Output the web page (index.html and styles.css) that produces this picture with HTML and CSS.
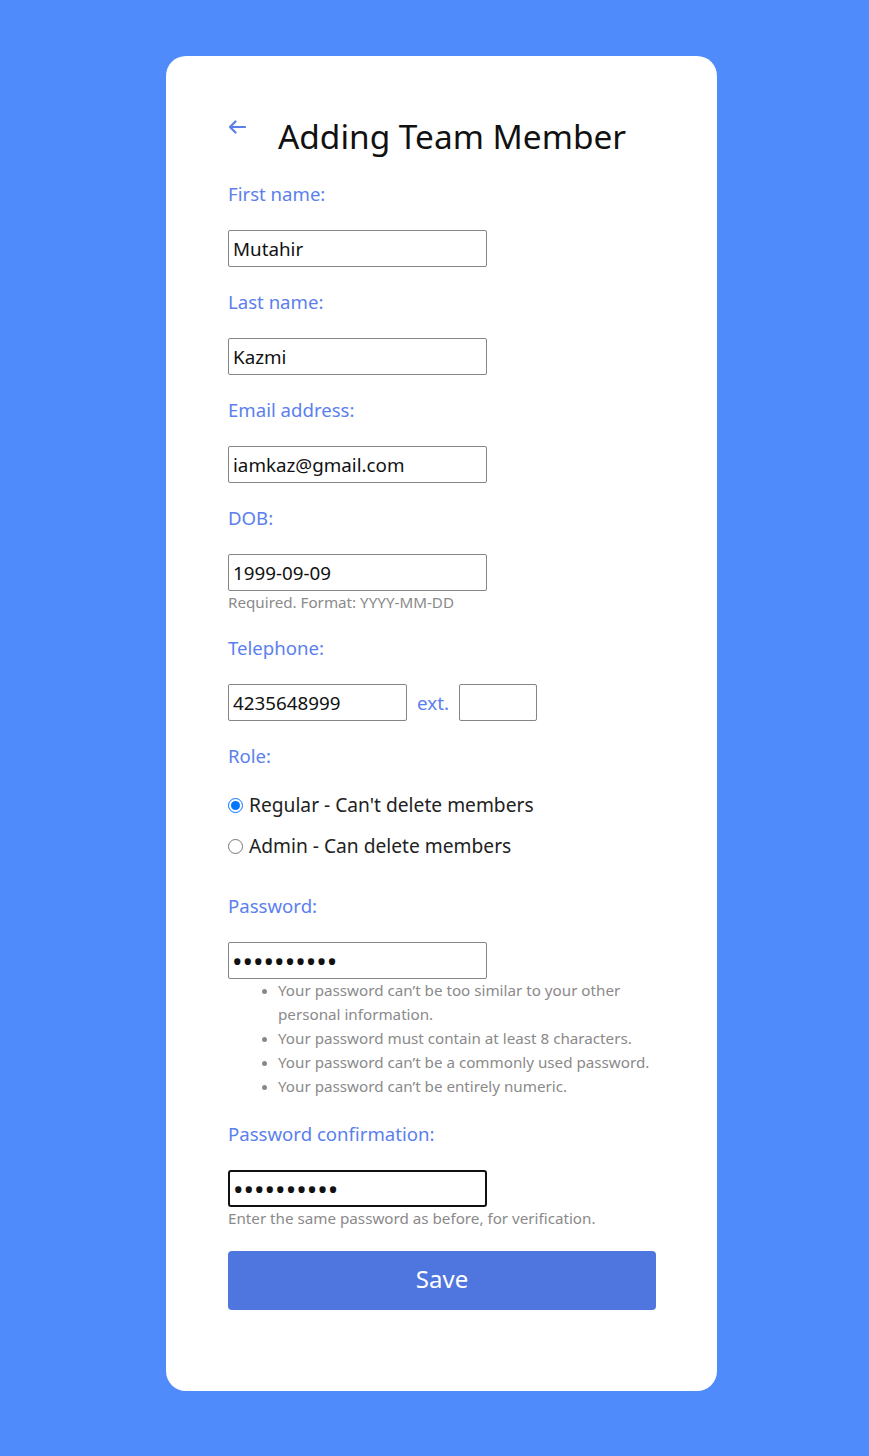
FILE: index.html
```html
<!DOCTYPE html>
<html lang="en">
<head>
<meta charset="utf-8">
<title>Adding Team Member</title>
<link rel="stylesheet" href="styles.css">
</head>
<body>
<main class="card">
  <header class="head">
    <a class="back" href="#" aria-label="Back">
      <svg width="18" height="14" viewBox="0 0 18 14"><path d="M17 7H2M7.5 1.5L2 7l5.5 5.5" fill="none" stroke="#5b7fe6" stroke-width="2.2" stroke-linecap="round" stroke-linejoin="round"/></svg>
    </a>
    <h1 class="title">Adding Team Member</h1>
  </header>
  <form class="form">
    <div class="field">
      <label class="label">First name:</label>
      <input class="input" type="text" value="Mutahir">
    </div>
    <div class="field">
      <label class="label">Last name:</label>
      <input class="input" type="text" value="Kazmi">
    </div>
    <div class="field">
      <label class="label">Email address:</label>
      <input class="input" type="text" value="iamkaz@gmail.com">
    </div>
    <div class="field">
      <label class="label">DOB:</label>
      <input class="input" type="text" value="1999-09-09">
      <span class="help">Required. Format: YYYY-MM-DD</span>
    </div>
    <div class="field">
      <label class="label">Telephone:</label>
      <div class="phone">
        <input class="input input-tel" type="text" value="4235648999">
        <span class="ext">ext.</span>
        <input class="input input-ext" type="text" value="">
      </div>
    </div>
    <div class="field field-role">
      <label class="label">Role:</label>
      <div class="radios">
        <label class="radio"><input type="radio" name="role" checked> Regular - Can't delete members</label>
        <label class="radio"><input type="radio" name="role"> Admin - Can delete members</label>
      </div>
    </div>
    <div class="field">
      <label class="label">Password:</label>
      <input class="input" type="password" value="abcdefghij">
      <ul class="rules">
        <li>Your password can’t be too similar to your other personal information.</li>
        <li>Your password must contain at least 8 characters.</li>
        <li>Your password can’t be a commonly used password.</li>
        <li>Your password can’t be entirely numeric.</li>
      </ul>
    </div>
    <div class="field">
      <label class="label">Password confirmation:</label>
      <input class="input input-focus" type="password" value="abcdefghij">
      <span class="help">Enter the same password as before, for verification.</span>
    </div>
    <button class="save" type="button">Save</button>
  </form>
</main>
</body>
</html>
```

FILE: styles.css
```css
* { box-sizing: border-box; }
html, body {
  margin: 0;
  padding: 0;
}
body {
  background: #508bfc;
  font-family: "Noto Sans", "Open Sans", sans-serif;
  color: #222;
  padding: 56px 0 65px;
}
.card {
  width: 551px;
  margin: 0 0 0 166px;
  background: #fff;
  border-radius: 20px;
  padding: 50px 62px 81px;
}
.head {
  display: flex;
  align-items: flex-start;
  height: 74px;
  padding-top: 6px;
}
.back {
  display: block;
  width: 50px;
  padding-top: 8px;
  line-height: 0;
}
.title {
  margin: 0;
  font-weight: 400;
  font-size: 33.4px;
  line-height: 48px;
  color: #111;
}
.form {
  display: flex;
  flex-direction: column;
}
.field {
  display: flex;
  flex-direction: column;
  align-items: flex-start;
  margin-bottom: 21px;
}
.label {
  display: block;
  font-size: 18.6px;
  line-height: 28px;
  color: #5b80ee;
  margin-bottom: 22px;
}
.input {
  width: 259px;
  height: 37px;
  border: 1px solid #858585;
  border-radius: 2px;
  padding: 0 4px;
  font-family: inherit;
  font-size: 18.8px;
  color: #111;
  background: #fff;
  outline: none;
}
.input[type="password"] {
  font-size: 28px;
  padding-left: 3px;
}
.input-focus {
  border: 2px solid #111;
  border-radius: 3px;
  padding: 0 2px;
}
.help {
  display: block;
  font-size: 15.2px;
  line-height: 22px;
  color: #8a8a8a;
}
.phone {
  display: flex;
  align-items: center;
}
.input-tel { width: 179px; }
.ext {
  font-size: 18.8px;
  color: #5b80ee;
  margin: 0 10px 0 10px;
}
.input-ext { width: 78px; }
.field-role .label { margin-bottom: 21px; }
.radios {
  display: flex;
  flex-direction: column;
  gap: 13px;
  margin-bottom: 11px;
}
.radio {
  display: flex;
  align-items: center;
  font-size: 19.2px;
  line-height: 28px;
  color: #222;
}
.radio input {
  width: 15px;
  height: 15px;
  margin: 0 6px 0 0;
}
.rules {
  margin: -1px 0 1px;
  padding: 0 0 0 50px;
  font-size: 15.2px;
  line-height: 24px;
  color: #8a8a8a;
  width: 428px;
}
.rules li::marker { font-size: 13px; }
.save {
  margin-top: 1px;
  width: 428px;
  height: 59px;
  border: none;
  border-radius: 4px;
  background: #4f75de;
  color: #fff;
  font-family: inherit;
  font-size: 24px;
  line-height: 56px;
  padding: 0 0 3px;
}
```
